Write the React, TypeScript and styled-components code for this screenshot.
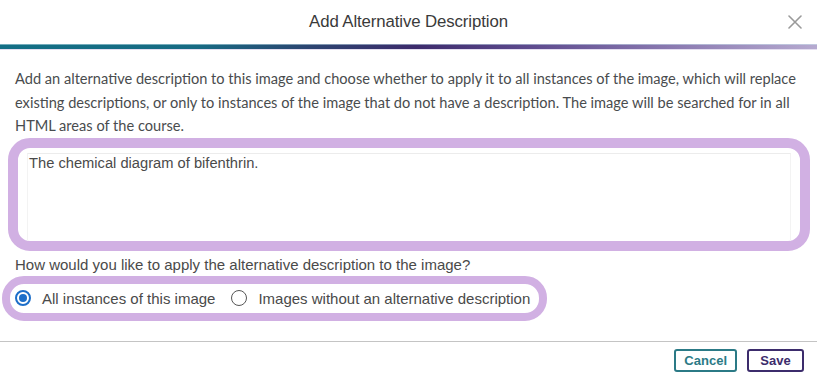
import React, { FC, useState } from 'react';
import styled, { createGlobalStyle } from 'styled-components';

const GlobalStyle = createGlobalStyle`
  html, body {
    margin: 0;
    padding: 0;
    background: #fff;
  }
`;

const Dialog = styled.div`
  width: 817px;
  height: 378px;
  display: flex;
  flex-direction: column;
  background: #fff;
  font-family: "Liberation Sans", Arial, sans-serif;
  color: #494c4e;
`;

const Header = styled.header`
  height: 44px;
  display: grid;
  grid-template-columns: 1fr auto 1fr;
  align-items: center;
`;

const Title = styled.h1`
  grid-column: 2;
  margin: 0;
  font-size: 16.8px;
  font-weight: 400;
  color: #3a3a3a;
  letter-spacing: -0.1px;
`;

const CloseButton = styled.button`
  grid-column: 3;
  justify-self: end;
  margin-right: 14px;
  width: 16px;
  height: 16px;
  padding: 0;
  border: 0;
  background: none;
  display: flex;
  align-items: center;
  justify-content: center;
  cursor: pointer;
`;

const Rule = styled.div`
  height: 6px;
  background:
    linear-gradient(180deg, #cfe9f0 0, transparent 1px, transparent 5px, #e4def0 5px),
    linear-gradient(90deg, #136f85 0%, #176b83 24%, #2c4470 38%, #3d2b6c 51%, #5e4b8e 65%, #8a79b0 82%, #b6aad0 100%);
`;

const Intro = styled.p`
  margin: 17px 5px 0 15px;
  font-family: Lato, "Liberation Sans", sans-serif;
  font-size: 14.6px;
  line-height: 23.5px;
  color: #494c4e;
`;

const Highlight = styled.div<{ $width?: string; $thick: number }>`
  box-sizing: border-box;
  border: ${(p) => p.$thick}px solid #d1b0e3;
  border-radius: 22px;
  background: #fff;
  width: ${(p) => p.$width || 'auto'};
`;

const DescriptionBox = styled(Highlight)`
  margin: 0 7px 0 8px;
  height: 113px;
  padding: 5px 9px 0 9px;
`;

const Field = styled.div`
  height: 100%;
  box-sizing: border-box;
  border-top: 1px solid #ececec;
  border-left: 1px solid #f3f3f3;
  border-right: 1px solid #f3f3f3;
  padding: 1px 1px;
  font-size: 14.7px;
  line-height: 16px;
  color: #4a4a4a;
`;

const Question = styled.div`
  margin: 6px 0 0 15px;
  font-size: 15px;
  line-height: 16px;
  color: #4a4a4a;
`;

const RadioGroup = styled(Highlight)`
  margin: 3px 0 0 2px;
  height: 45px;
  display: flex;
  align-items: center;
  padding: 0 9px 0 5px;
`;

const Option = styled.label`
  display: flex;
  align-items: center;
  gap: 11px;
  font-size: 15px;
  color: #4a4a4a;
  white-space: nowrap;
  cursor: pointer;
  & + & {
    margin-left: 16px;
  }
`;

const Dot = styled.span<{ $checked: boolean }>`
  box-sizing: border-box;
  width: 16px;
  height: 16px;
  border-radius: 50%;
  border: ${(p) => (p.$checked ? '2px solid #1c6ec9' : '1.5px solid #565656')};
  display: flex;
  align-items: center;
  justify-content: center;
  &::after {
    content: '';
    width: 8px;
    height: 8px;
    border-radius: 50%;
    background: ${(p) => (p.$checked ? '#1c6ec9' : 'transparent')};
  }
`;

const Divider = styled.hr`
  margin: 20px 0 0 0;
  border: 0;
  border-top: 1px solid #c4c4c4;
`;

const Footer = styled.footer`
  display: flex;
  justify-content: flex-end;
  gap: 10px;
  padding: 7px 13px 0 0;
`;

const Button = styled.button<{ $tone: string }>`
  height: 23px;
  min-width: 57px;
  padding: 0 8px;
  border: 2px solid ${(p) => p.$tone};
  border-radius: 3px;
  background: #fff;
  color: ${(p) => p.$tone};
  font-family: "Liberation Sans", Arial, sans-serif;
  font-weight: 700;
  font-size: 13px;
  cursor: pointer;
`;

const App: FC = () => {
  const [mode, setMode] = useState<'all' | 'missing'>('all');

  return (
    <>
      <GlobalStyle />
      <Dialog>
        <Header>
          <Title>Add Alternative Description</Title>
          <CloseButton aria-label="Close">
            <svg width="14" height="14" viewBox="0 0 14 14">
              <path d="M1 1L13 13M13 1L1 13" stroke="#9a9a9a" strokeWidth="1.6" strokeLinecap="round" />
            </svg>
          </CloseButton>
        </Header>
        <Rule />
        <Intro>
          Add an alternative description to this image and choose whether to apply it to all instances of the image, which will replace
          existing descriptions, or only to instances of the image that do not have a description. The image will be searched for in all
          HTML areas of the course.
        </Intro>
        <DescriptionBox $thick={10}>
          <Field>The chemical diagram of bifenthrin.</Field>
        </DescriptionBox>
        <Question>How would you like to apply the alternative description to the image?</Question>
        <RadioGroup $thick={8} $width="545px">
          <Option onClick={() => setMode('all')}>
            <Dot $checked={mode === 'all'} />
            All instances of this image
          </Option>
          <Option onClick={() => setMode('missing')}>
            <Dot $checked={mode === 'missing'} />
            Images without an alternative description
          </Option>
        </RadioGroup>
        <Divider />
        <Footer>
          <Button $tone="#2b7a86">Cancel</Button>
          <Button $tone="#3c2c6c">Save</Button>
        </Footer>
      </Dialog>
    </>
  );
};

export default App;
